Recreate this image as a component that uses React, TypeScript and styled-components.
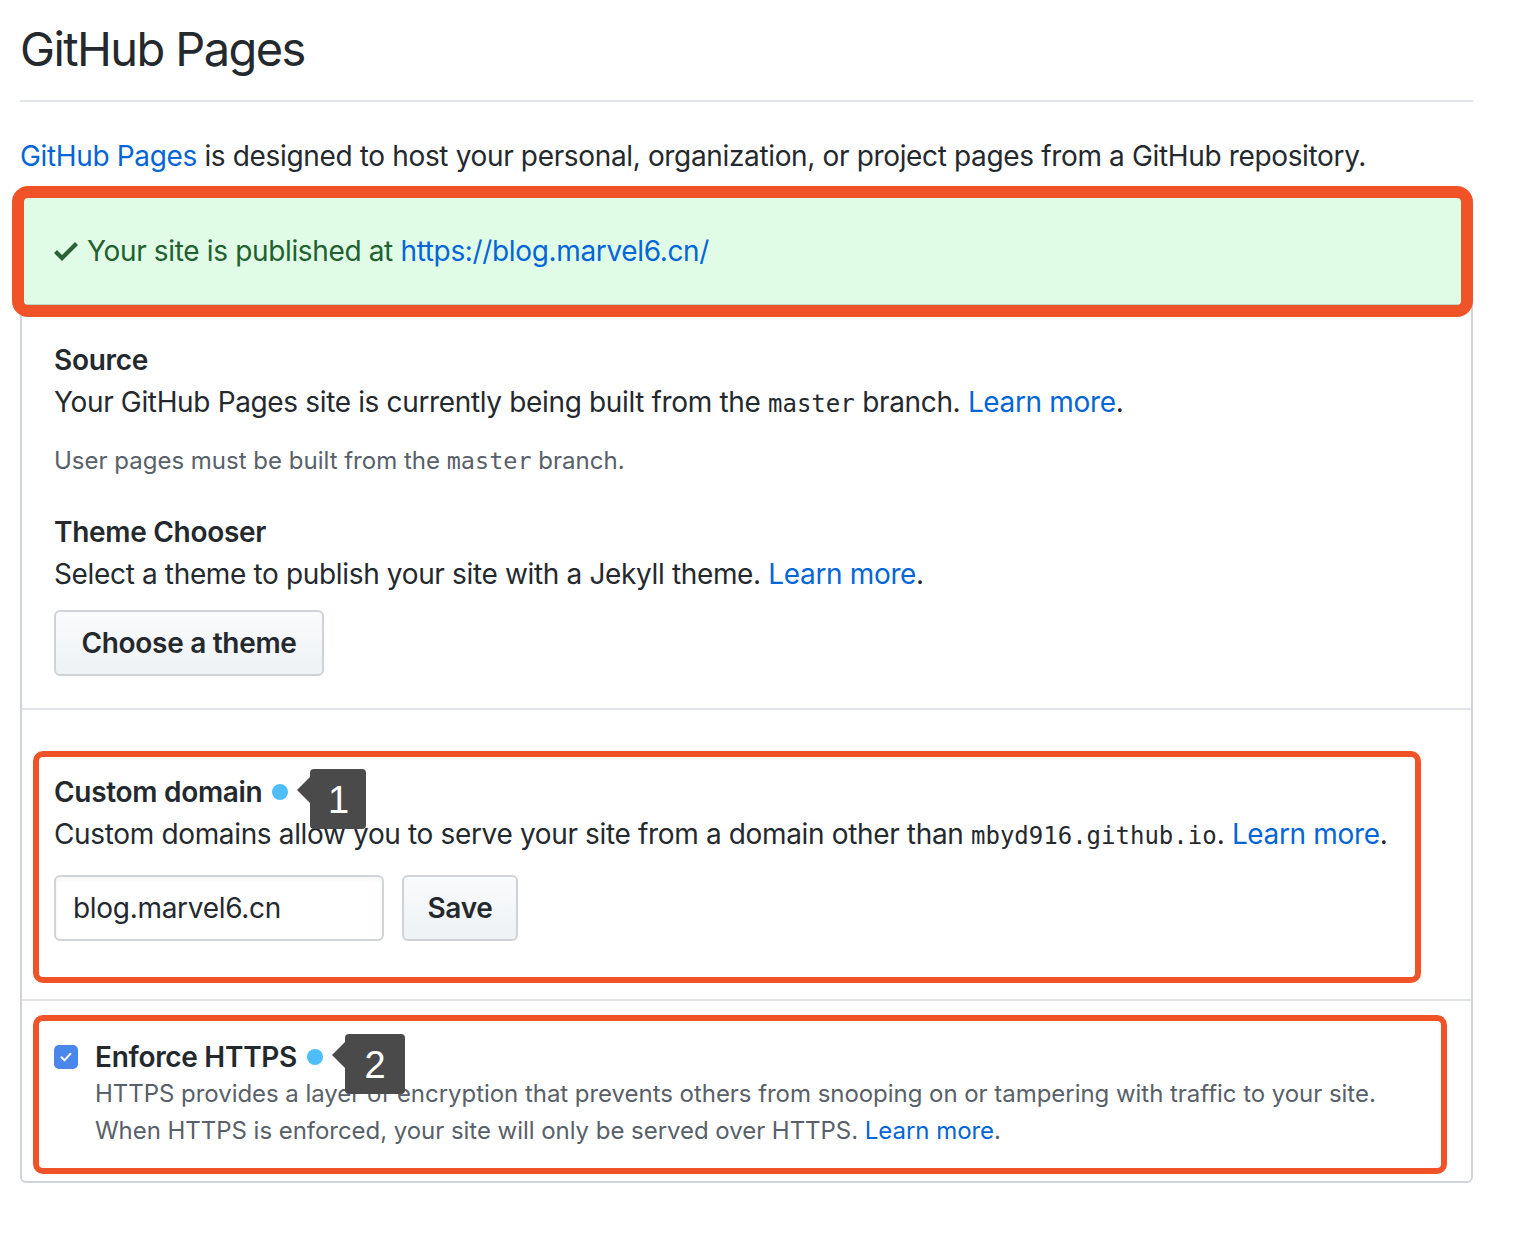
import React from "react";
import styled, { createGlobalStyle } from "styled-components";

const GlobalStyle = createGlobalStyle`
  html, body { margin: 0; padding: 0; background: #fff; }
  body {
    font-family: Inter, "Noto Sans", "Liberation Sans", sans-serif;
    color: #24292e;
    -webkit-font-smoothing: antialiased;
  }
  * { box-sizing: border-box; }
`;

const Page = styled.div`
  width: 1473px;
  padding-left: 20px;
  padding-bottom: 56px;
`;

const Subhead = styled.div`
  border-bottom: 2px solid #e1e4e8;
  padding-top: 19px;
  padding-bottom: 21px;
`;

const Title = styled.h2`
  margin: 0;
  font-size: 47px;
  line-height: 60px;
  font-weight: 400;
  letter-spacing: -1.6px;
`;

const Intro = styled.p`
  margin: 33px 0 19px;
  font-size: 28px;
  line-height: 42px;
  letter-spacing: -0.35px;
`;

const Link = styled.a`
  color: #0366d6;
  text-decoration: none;
`;

const Panel = styled.div`
  border: 2px solid #d1d5da;
  border-radius: 6px;
`;

const Flash = styled.div`
  position: relative;
  display: flex;
  align-items: center;
  background: #e0fce6;
  border-bottom: 2px solid #bcd8c3;
  padding: 32px 32px 32px;
  font-size: 28px;
  line-height: 42px;
  color: #22602f;
  letter-spacing: -0.35px;
`;

const CheckIcon = styled.svg`
  width: 24px;
  height: 32px;
  margin-right: 9px;
  fill: #2a6236;
  flex: none;
`;

const Highlight = styled.div<{ $t: number; $r: number; $b: number; $l: number; $w: number; $rad: number }>`
  position: absolute;
  top: ${(p) => p.$t}px;
  right: ${(p) => p.$r}px;
  bottom: ${(p) => p.$b}px;
  left: ${(p) => p.$l}px;
  border: ${(p) => p.$w}px solid #ef5327;
  border-radius: ${(p) => p.$rad}px;
  pointer-events: none;
  z-index: 2;
`;

const Section = styled.div<{ $pt: number; $pb: number; $divider?: boolean }>`
  position: relative;
  padding: ${(p) => p.$pt}px 32px ${(p) => p.$pb}px;
  border-top: ${(p) => (p.$divider ? "2px solid #e1e4e8" : "none")};
`;

const Heading = styled.h3`
  margin: 0;
  font-size: 28px;
  line-height: 42px;
  font-weight: 600;
  letter-spacing: -0.3px;
  display: flex;
  align-items: center;
`;

const Text = styled.p`
  margin: 0;
  font-size: 28px;
  line-height: 42px;
  letter-spacing: -0.35px;
`;

const Note = styled.p`
  margin: 18px 0 0;
  font-size: 24px;
  line-height: 36px;
  color: #586069;
  letter-spacing: 0;
`;

const Code = styled.code<{ $size: number }>`
  font-family: "DejaVu Sans Mono", "Liberation Mono", monospace;
  font-size: ${(p) => p.$size}px;
  letter-spacing: 0;
`;

const SubBlock = styled.div`
  margin-top: 32px;
`;

const Button = styled.button<{ $w: number }>`
  display: inline-flex;
  align-items: center;
  justify-content: center;
  width: ${(p) => p.$w}px;
  height: 66px;
  font-family: inherit;
  font-size: 28px;
  font-weight: 600;
  color: #24292e;
  letter-spacing: -0.3px;
  background: linear-gradient(180deg, #fafbfc 0%, #eff3f6 90%);
  border: 2px solid #cfd3d7;
  border-radius: 6px;
  padding: 0;
`;

const ButtonRow = styled.div<{ $mt: number }>`
  display: flex;
  gap: 18px;
  margin-top: ${(p) => p.$mt}px;
`;

const Input = styled.div`
  width: 330px;
  height: 66px;
  display: flex;
  align-items: center;
  padding-left: 17px;
  border: 2px solid #d1d5da;
  border-radius: 6px;
  font-size: 28px;
  letter-spacing: -0.3px;
  box-shadow: inset 0 2px 4px rgba(27, 31, 35, 0.05);
`;

const DotWrap = styled.span`
  position: relative;
  display: inline-block;
  width: 16px;
  height: 16px;
  margin-left: 10px;
`;

const Dot = styled.span`
  display: block;
  width: 16px;
  height: 16px;
  border-radius: 50%;
  background: #4fbdf7;
`;

const Callout = styled.span<{ $w: number }>`
  position: absolute;
  left: 38px;
  top: -15px;
  width: ${(p) => p.$w}px;
  height: 60px;
  background: #4a4a4a;
  border-radius: 4px;
  color: #fff;
  font-family: "Liberation Sans", Arial, sans-serif;
  font-size: 38px;
  font-weight: 400;
  line-height: 62px;
  text-align: center;
  z-index: 3;
  &::before {
    content: "";
    position: absolute;
    left: -13px;
    top: 8px;
    border-style: solid;
    border-width: 13px 13px 13px 0;
    border-color: transparent #4a4a4a transparent transparent;
  }
`;

const CheckRow = styled.div`
  display: flex;
  align-items: flex-start;
`;

const Checkbox = styled.span`
  flex: none;
  width: 24px;
  height: 24px;
  margin-top: 9px;
  margin-right: 17px;
  border-radius: 5px;
  background: #4a86ec;
  display: flex;
  align-items: center;
  justify-content: center;
`;

const CheckBody = styled.div`
  display: flex;
  flex-direction: column;
`;

const Desc = styled.p`
  margin: -2px 0 0;
  font-size: 24px;
  line-height: 36.5px;
  color: #586069;
  letter-spacing: -0.04px;
`;

export default function App() {
  return (
    <>
      <GlobalStyle />
      <Page>
        <Subhead>
          <Title>GitHub Pages</Title>
        </Subhead>
        <Intro>
          <Link href="#">GitHub Pages</Link> is designed to host your personal, organization, or project pages from a GitHub repository.
        </Intro>
        <Panel>
          <Flash>
            <CheckIcon viewBox="0 0 12 16">
              <path d="M12 5l-8 8-4-4 1.5-1.5L4 10l6.5-6.5L12 5z" />
            </CheckIcon>
            <span>
              Your site is published at <Link href="#">https://blog.marvel6.cn/</Link>
            </span>
            <Highlight $t={-12} $r={-2} $b={-13} $l={-10} $w={12} $rad={16} />
          </Flash>

          <Section $pt={33} $pb={32}>
            <Heading>Source</Heading>
            <Text>
              Your GitHub Pages site is currently being built from the <Code $size={24}>master</Code> branch.{" "}
              <Link href="#">Learn more</Link>.
            </Text>
            <Note>
              User pages must be built from the <Code $size={23.5}>master</Code> branch.
            </Note>
            <SubBlock>
              <Heading>Theme Chooser</Heading>
              <Text>
                Select a theme to publish your site with a Jekyll theme. <Link href="#">Learn more</Link>.
              </Text>
            </SubBlock>
            <ButtonRow $mt={15}>
              <Button $w={270}>Choose a theme</Button>
            </ButtonRow>
          </Section>

          <Section $pt={61} $pb={58} $divider>
            <Heading>
              Custom domain
              <DotWrap>
                <Dot />
                <Callout $w={56}>1</Callout>
              </DotWrap>
            </Heading>
            <Text>
              Custom domains allow you to serve your site from a domain other than{" "}
              <Code $size={24}>mbyd916.github.io</Code>. <Link href="#">Learn more</Link>.
            </Text>
            <ButtonRow $mt={18}>
              <Input>blog.marvel6.cn</Input>
              <Button $w={116}>Save</Button>
            </ButtonRow>
            <Highlight $t={41} $r={50} $b={16} $l={11} $w={6} $rad={10} />
          </Section>

          <Section $pt={35} $pb={32} $divider>
            <CheckRow>
              <Checkbox>
                <svg width="16" height="16" viewBox="0 0 16 16">
                  <path d="M3.5 8.3l3 3 6-6.6" fill="none" stroke="#fff" strokeWidth="2" strokeLinecap="round" strokeLinejoin="round" />
                </svg>
              </Checkbox>
              <CheckBody>
                <Heading>
                  Enforce HTTPS
                  <DotWrap>
                    <Dot />
                    <Callout $w={60}>2</Callout>
                  </DotWrap>
                </Heading>
                <Desc>
                  HTTPS provides a layer of encryption that prevents others from snooping on or tampering with traffic to your site.
                  <br />
                  When HTTPS is enforced, your site will only be served over HTTPS. <Link href="#">Learn more</Link>.
                </Desc>
              </CheckBody>
            </CheckRow>
            <Highlight $t={14} $r={24} $b={7} $l={11} $w={6} $rad={10} />
          </Section>
        </Panel>
      </Page>
    </>
  );
}
